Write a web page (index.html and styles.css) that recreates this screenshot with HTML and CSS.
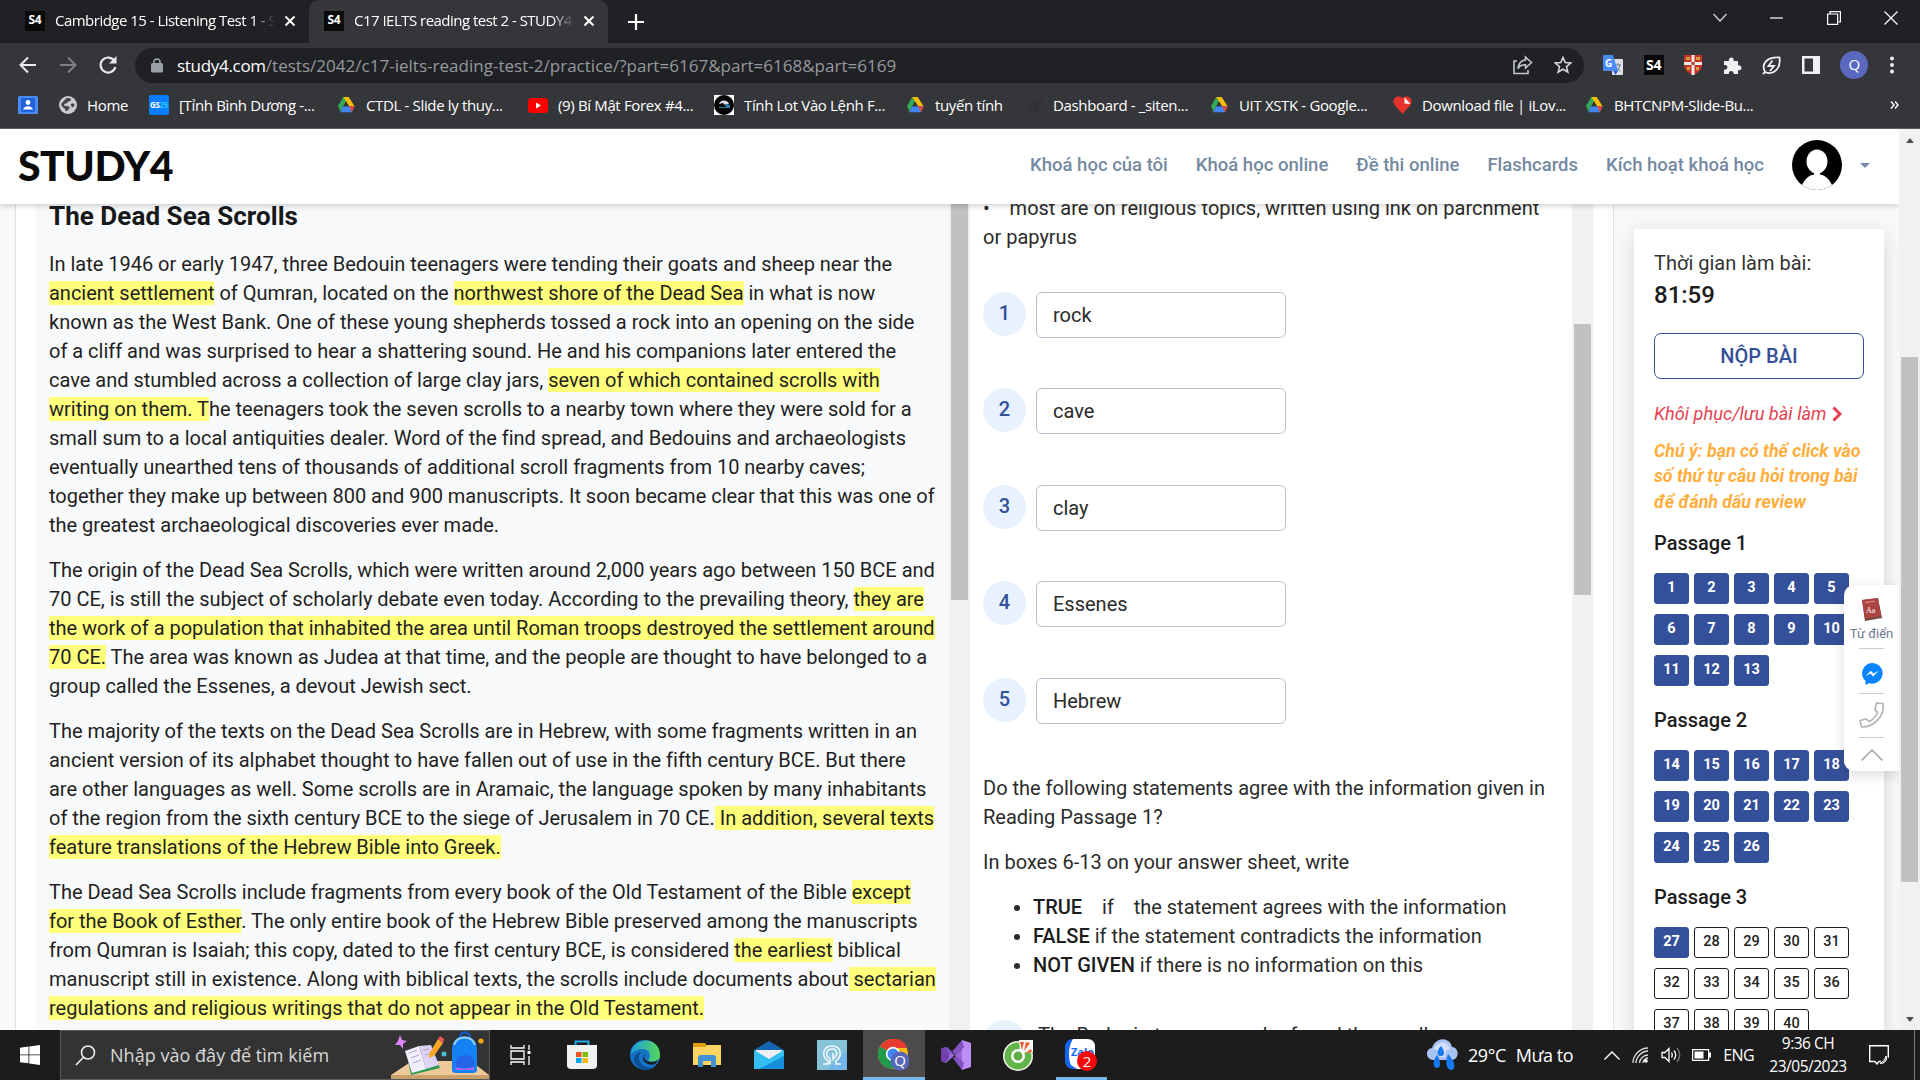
FILE: index.html
```html
<!DOCTYPE html>
<html lang="vi">
<head>
<meta charset="utf-8">
<title>C17 IELTS reading test 2 - STUDY4</title>
<link rel="stylesheet" href="styles.css">
</head>
<body>
<svg class="defs" width="0" height="0">
  <symbol id="drive" viewBox="0 0 20 20"><path d="M7 1h6l-3.500 6L4 17 1 11.500z" fill="#34a853"/><path d="M7 1h6l6.500 10.500h-6z" fill="#fbbc04"/><path d="M6.700 11.500h12.800L16.500 18h-13z" fill="#4285f4"/><path d="M13.500 11.500h6L16.500 18z" fill="#ea4335"/><path d="M1 11.500 4 17l-.5 1z" fill="#188038"/><path d="M10 6.300 13.200 11.500H6.800z" fill="#35363a"/></symbol>
  <symbol id="x" viewBox="0 0 12 12"><path d="M1.500 1.500l9 9M10.500 1.500l-9 9" stroke="#fff" stroke-width="2"/></symbol>
</svg>
<div class="screen">
  <div class="tabstrip">
    <div class="tab"><span class="fav">S4</span><span class="tab-title">Cambridge 15 - Listening Test 1 - STUDY4</span><svg width="12" height="12"><use href="#x"/></svg></div>
    <div class="tab active"><span class="fav">S4</span><span class="tab-title">C17 IELTS reading test 2 - STUDY4</span><svg width="12" height="12"><use href="#x"/></svg></div>
    <svg class="newtab" width="16" height="16" viewBox="0 0 16 16"><path d="M8 0v16M0 8h16" stroke="#fff" stroke-width="2.200"/></svg>
    <div class="winbtns">
      <svg width="14" height="10" viewBox="0 0 14 10"><path d="M.5 1l6.500 7 6.500-7" fill="none" stroke="#ddd" stroke-width="1.200"/></svg>
      <svg width="14" height="14" viewBox="0 0 14 14"><path d="M0 7h13" stroke="#fff" stroke-width="1.200"/></svg>
      <svg width="14" height="14" viewBox="0 0 14 14"><path d="M.6 3h10v10.400H.6zM3 3V.6h10.400V11h-2.600" fill="none" stroke="#fff" stroke-width="1.200"/></svg>
      <svg width="14" height="14" viewBox="0 0 14 14"><path d="M.5.5l13 13M13.500.5l-13 13" stroke="#fff" stroke-width="1.200"/></svg>
    </div>
  </div>
  <div class="toolbar">
    <svg class="nav-ic" width="18" height="18" viewBox="0 0 18 18"><path d="M17 9H2M9 1.500L1.500 9 9 16.500" fill="none" stroke="#e8eaed" stroke-width="2"/></svg>
    <svg class="nav-ic" width="18" height="18" viewBox="0 0 18 18"><path d="M1 9h15M9 1.500L16.500 9 9 16.500" fill="none" stroke="#7d7f83" stroke-width="2"/></svg>
    <svg class="nav-ic" width="18" height="18" viewBox="0 0 18 18"><path d="M15.500 5A7.500 7.500 0 1 0 16.400 11" fill="none" stroke="#e8eaed" stroke-width="2.200"/><path d="M17.500 0v7.500H10z" fill="#e8eaed"/></svg>
    <div class="omnibox">
      <svg width="12" height="15" viewBox="0 0 12 15"><rect x="0" y="5" width="12" height="9.500" rx="1.500" fill="#9aa0a6"/><path d="M3 6V4a3 3 0 0 1 6 0v2" fill="none" stroke="#9aa0a6" stroke-width="1.600"/></svg>
      <div class="url"><b>study4.com</b>/tests/2042/c17-ielts-reading-test-2/practice/?part=6167&amp;part=6168&amp;part=6169</div>
      <svg class="share" width="20" height="20" viewBox="0 0 20 20" fill="none" stroke="#c4c7cb" stroke-width="1.600"><path d="M4 6H1v12.500h14V15"/><path d="M12.500 2l6 5.500-6 5.500v-3.300c-4 0-6 1-7.500 3.800.5-4.500 2.800-8 7.500-8.500z"/></svg>
      <svg width="18" height="18" viewBox="0 0 18 18"><path d="M9 1.500l2.200 5 5.500.5-4.200 3.600 1.300 5.400L9 13.200 4.200 16l1.300-5.400L1.300 7l5.500-.5z" fill="none" stroke="#d5d7da" stroke-width="1.600"/></svg>
    </div>
    <div class="exts">
      <svg width="20" height="21" viewBox="0 0 20 21"><rect x="9" y="4" width="11" height="16" rx="1" fill="#dfe1e4"/><path d="M12 10h6M15 8v2M17 10c-.6 3-2 4.500-4 6M13 12c1 2 2.500 3 4.500 4" stroke="#5f7d91" fill="none"/><path d="M1 0h9l5 16H1a1 1 0 0 1-1-1V1a1 1 0 0 1 1-1z" fill="#4b8bf5"/><path d="M10.500 16H15l-2.500 4z" fill="#2a55c8"/><text x="2" y="12" class="g-letter">G</text></svg>
      <span class="s4ext">S4</span>
      <svg width="18" height="20" viewBox="0 0 18 20"><path d="M0 0h18v9c0 6-4 9-9 11-5-2-9-5-9-11z" fill="#c8322b"/><path d="M7.500 0h3v7H18v3h-7.500v10h-3V10H0V7h7.500z" fill="#f3ece4"/><path d="M2 2h4v3H2zM12 2h4v3h-4zM3 12h3v3H3zM12 12h3v3h-3z" fill="#d69d34"/><circle cx="9" cy="8.500" r="1.800" fill="#b43b32"/></svg>
      <svg width="19" height="19" viewBox="0 0 19 19"><path d="M1 5h5a2.500 2.500 0 1 1 4.600 0H15v4.500a2.500 2.500 0 1 1 0 4.600V18h-4.500a2.400 2.400 0 1 0-4.600 0H1v-4.500a2.400 2.400 0 1 0 0-4.400z" fill="#eef0f2"/></svg>
      <svg width="19" height="19" viewBox="0 0 19 19" fill="none" stroke="#eef0f2" stroke-width="1.800"><path d="M3 16C-1 8 4 1 17.500 1.500 19 12 12 20 3 16L1 18"/><path d="M10.500 4.500L6.500 10h5.500l-4 5"/></svg>
      <svg width="18" height="18" viewBox="0 0 18 18"><path d="M0 0h18v18H0zM2.500 2.500v13H11v-13z" fill="#eef0f2" fill-rule="evenodd"/></svg>
      <span class="profile">Q</span>
      <svg width="6" height="18" viewBox="0 0 6 18" fill="#eef0f2"><circle cx="3" cy="2.500" r="2"/><circle cx="3" cy="9" r="2"/><circle cx="3" cy="15.500" r="2"/></svg>
    </div>
  </div>
  <div class="bookmarks">
    <div><svg width="20" height="18" viewBox="0 0 20 18"><rect width="20" height="18" rx="1.500" fill="#4a8af4"/><rect x="3" y="2" width="14" height="14" fill="#1f62d8"/><circle cx="10" cy="6.500" r="2.400" fill="#fff"/><path d="M5 13.500c1-4.500 9-4.500 10 0z" fill="#fff"/></svg></div>
    <div class="home"><svg width="18" height="18" viewBox="0 0 18 18"><circle cx="9" cy="9" r="9" fill="#c9cbce"/><path d="M7 2.500c3-1 5 0 5 1.500s-3 1-3.500 2.500-3 .5-3.500 2 3 1.500 5 2-1 4-2.500 4.500-1-2-2.500-3-2.500-2-3-4" fill="#45474b"/><path d="M12 8c1-1 3-.5 3.500.500S14 12 13 11s-1.500-2-1-3z" fill="#45474b"/></svg>Home</div>
    <div><span class="gs">GS<i>25</i></span>[Tỉnh Bình Dương -...</div>
    <div class="dr"><svg width="18" height="18"><use href="#drive"/></svg>CTDL - Slide ly thuy...</div>
    <div class="yt"><svg width="20" height="15" viewBox="0 0 20 15"><rect width="20" height="15" rx="3.500" fill="#f00"/><path d="M8 4.500l5 3-5 3z" fill="#fff"/></svg>(9) Bí Mật Forex #4...</div>
    <div class="lot"><svg width="20" height="20" viewBox="0 0 20 20"><path d="M0 0h20v20H0z" fill="#fff"/><circle cx="10" cy="10" r="10" fill="#050505"/><path d="M5 9c2-5 9-4 10 0l-4 1-2-2z" fill="#d7dde2"/><path d="M11 9l5 1v3H5v-1h7z" fill="#287fae"/></svg>Tính Lot Vào Lệnh F...</div>
    <div class="dr"><svg width="18" height="18"><use href="#drive"/></svg>tuyến tính</div>
    <div class="dash"><svg width="20" height="20" viewBox="0 0 20 20"><path d="M19 1L1 12l4 2zM19 1l-4 17-6-3zM5 14l2 4 2-3z" fill="#303135"/></svg>Dashboard - _siten...</div>
    <div class="dr"><svg width="18" height="18"><use href="#drive"/></svg>UIT XSTK - Google...</div>
    <div><svg width="19" height="18" viewBox="0 0 19 18"><path d="M9.500 18L1.500 9C-2 3 4-2 9.500 2c5.500-4 11.500 1 8 7z" fill="#e5322d"/><path d="M11.500 1.500L17.500 8l-6-.5z" fill="#fff"/></svg>Download file | iLov...</div>
    <div class="dr"><svg width="18" height="18"><use href="#drive"/></svg>BHTCNPM-Slide-Bu...</div>
    <svg class="more" width="9" height="8" viewBox="0 0 9 8"><path d="M1 .5L4 4 1 7.500M5 .5L8 4 5 7.500" fill="none" stroke="#fff" stroke-width="1.400"/></svg>
  </div>

  <div class="viewport">
    <div class="site">
      <header class="site-header">
        <div class="logo">STUDY4</div>
        <nav><a>Khoá học của tôi</a><a>Khoá học online</a><a>Đề thi online</a><a>Flashcards</a><a>Kích hoạt khoá học</a></nav>
        <svg class="avatar" width="50" height="50" viewBox="0 0 50 50"><clipPath id="c"><circle cx="25" cy="25" r="25"/></clipPath><g clip-path="url(#c)"><path d="M0 0h50v50H0z"/><path d="M7 52C10 42 16 35 22 34.500V31h6v3.500C34 35 40 42 43 52z" fill="#fff"/><ellipse cx="25" cy="21.500" rx="10.500" ry="12" fill="#fff"/></g></svg>
        <span class="caret"></span>
      </header>
      <main class="work">
        <article class="passage">
          <h1>The Dead Sea Scrolls</h1>
          <p>In late 1946 or early 1947, three Bedouin teenagers were tending their goats and sheep near the<br><mark>ancient settlement</mark> of Qumran, located on the <mark>northwest shore of the Dead Sea</mark> in what is now<br>known as the West Bank. One of these young shepherds tossed a rock into an opening on the side<br>of a cliff and was surprised to hear a shattering sound. He and his companions later entered the<br>cave and stumbled across a collection of large clay jars, <mark>seven of which contained scrolls with</mark><br><mark>writing on them. T</mark>he teenagers took the seven scrolls to a nearby town where they were sold for a<br>small sum to a local antiquities dealer. Word of the find spread, and Bedouins and archaeologists<br>eventually unearthed tens of thousands of additional scroll fragments from 10 nearby caves;<br>together they make up between 800 and 900 manuscripts. It soon became clear that this was one of<br>the greatest archaeological discoveries ever made.</p>
          <p>The origin of the Dead Sea Scrolls, which were written around 2,000 years ago between 150 BCE and<br>70 CE, is still the subject of scholarly debate even today. According to the prevailing theory, <mark>they are</mark><br><mark>the work of a population that inhabited the area until Roman troops destroyed the settlement around</mark><br><mark>70 CE.</mark> The area was known as Judea at that time, and the people are thought to have belonged to a<br>group called the Essenes, a devout Jewish sect.</p>
          <p>The majority of the texts on the Dead Sea Scrolls are in Hebrew, with some fragments written in an<br>ancient version of its alphabet thought to have fallen out of use in the fifth century BCE. But there<br>are other languages as well. Some scrolls are in Aramaic, the language spoken by many inhabitants<br>of the region from the sixth century BCE to the siege of Jerusalem in 70 CE.<mark> In addition, several texts</mark><br><mark>feature translations of the Hebrew Bible into Greek.</mark></p>
          <p>The Dead Sea Scrolls include fragments from every book of the Old Testament of the Bible <mark>except</mark><br><mark>for the Book of Esther</mark>. The only entire book of the Hebrew Bible preserved among the manuscripts<br>from Qumran is Isaiah; this copy, dated to the first century BCE, is considered <mark>the earliest</mark> biblical<br>manuscript still in existence. Along with biblical texts, the scrolls include documents about<mark> sectarian</mark><br><mark>regulations and religious writings that do not appear in the Old Testament.</mark></p>
        </article>
        <div class="track t-left"><i></i></div>
        <section class="questions">
          <p class="lead">•&nbsp;&nbsp; &nbsp;most are on religious topics, written using ink on parchment<br>or papyrus</p>
          <div class="q"><b>1</b><span>rock</span></div>
          <div class="q"><b>2</b><span>cave</span></div>
          <div class="q"><b>3</b><span>clay</span></div>
          <div class="q"><b>4</b><span>Essenes</span></div>
          <div class="q"><b>5</b><span>Hebrew</span></div>
          <p class="task">Do the following statements agree with the information given in<br>Reading Passage 1?</p>
          <p>In boxes 6-13 on your answer sheet, write</p>
          <ul>
            <li><strong>TRUE</strong>&nbsp; &nbsp; if&nbsp; &nbsp; the statement agrees with the information</li>
            <li><strong>FALSE</strong> if the statement contradicts the information</li>
            <li><strong>NOT GIVEN</strong> if there is no information on this</li>
          </ul>
          <div class="q next"><b>6</b><em>The Bedouin teenagers who found the scrolls</em></div>
        </section>
        <div class="track t-right"><i></i></div>
        <aside>
          <div class="card">
            <div class="time-label">Thời gian làm bài:</div>
            <div class="time">81:59</div>
            <div class="submit">NỘP BÀI</div>
            <div class="restore">Khôi phục/lưu bài làm <svg width="10" height="16" viewBox="0 0 10 16"><path d="M1.500 1.500L8 8l-6.500 6.500" fill="none" stroke="#e43f4f" stroke-width="3"/></svg></div>
            <div class="note">Chú ý: bạn có thể click vào<br>số thứ tự câu hỏi trong bài<br>để đánh dấu review</div>
            <h2>Passage 1</h2>
            <div class="nums done"><i>1</i><i>2</i><i>3</i><i>4</i><i>5</i><i>6</i><i>7</i><i>8</i><i>9</i><i>10</i><i>11</i><i>12</i><i>13</i></div>
            <h2>Passage 2</h2>
            <div class="nums done"><i>14</i><i>15</i><i>16</i><i>17</i><i>18</i><i>19</i><i>20</i><i>21</i><i>22</i><i>23</i><i>24</i><i>25</i><i>26</i></div>
            <h2>Passage 3</h2>
            <div class="nums"><i class="on">27</i><i>28</i><i>29</i><i>30</i><i>31</i><i>32</i><i>33</i><i>34</i><i>35</i><i>36</i><i>37</i><i>38</i><i>39</i><i>40</i></div>
          </div>
        </aside>
      </main>
      <div class="float">
        <svg width="22" height="24" viewBox="0 0 22 24"><path d="M1 2l16-2 4 20-17 3z" fill="#6d4a3a"/><path d="M1 2l16-2 3 18-16 3z" fill="#ad4444"/><path d="M4 4.500l10-1.200" stroke="#d99a90"/><text x="5" y="15" class="aa">Aa</text></svg>
        <span>Từ điển</span><hr>
        <svg class="msg" width="22" height="22" viewBox="0 0 22 22"><path d="M11 0a10.700 10.300 0 1 1-3 20.200L4.500 22v-4A10.400 10.400 0 0 1 11 0z" fill="#0a84ff"/><path d="M4.500 13.300l5.300-5.500 2.700 2.800 5-2.800-5.300 5.600-2.700-2.800z" fill="#fff"/></svg><hr>
        <svg class="phone" width="26" height="26" viewBox="0 0 26 26"><path d="M17.500 1l6.500.500c2 12-9 24-21.500 23.500L1 18.500l6.500-1.500 2.500 2.500c3.500-1.500 7-5 8.800-9l-2.800-2.500z" fill="none" stroke="#b3b5b8" stroke-width="1.700" stroke-linejoin="round"/></svg><hr>
        <svg class="up" width="22" height="12" viewBox="0 0 22 12"><path d="M.5 11.500L11 1l10.500 10.500" fill="none" stroke="#aaa" stroke-width="1.600"/></svg>
      </div>
    </div>
    <div class="track t-page"><u class="up-arrow"></u><i></i><u class="down-arrow"></u></div>
  </div>

  <footer class="taskbar">
    <div class="start"><svg width="20" height="20" viewBox="0 0 20 20" fill="#fff"><path d="M0 2.800L8.500 1.500v8H0zM9.300 1.400L20 0v9.500H9.300zM0 10.300h8.500v8L0 17.200zM9.300 10.300H20V20L9.300 18.500z"/></svg></div>
    <div class="search">
      <svg width="21" height="21" viewBox="0 0 21 21"><circle cx="13" cy="7.500" r="6.500" fill="none" stroke="#eee" stroke-width="1.600"/><path d="M8.500 12.200L1 20" stroke="#eee" stroke-width="1.600"/></svg>
      <span>Nhập vào đây để tìm kiếm</span>
      <svg class="school" width="98" height="48" viewBox="0 0 98 48"><path d="M0 44L21 30h59l18 14z" fill="#efc99a"/><path d="M0 44h98v4H0z" fill="#c9a06b"/><path d="M15 20l5 24 29-7-4-9z" fill="#2c9a50"/><path d="M14 20l14-5 7 23-14 4z" fill="#f2eefc"/><path d="M28 15l12-1 8 20-13 4z" fill="#ddd2f7"/><path d="M18 22l8-3M20 27l8-3M22 32l8-3M32 19l6-1M34 24l7-2" stroke="#a8a1c4"/><path d="M38 23l9-15 5 4-9 13-5 2z" fill="#f9a72b"/><path d="M47 8l2-3 4 3-1 4z" fill="#f45858"/><path d="M9 4l2 5 5 1-4 3 0 5-3-4-5 0 3-4z" fill="#e087f5"/><circle cx="53" cy="23" r="2.500" fill="#45c2d2"/><circle cx="90" cy="10" r="2.600" fill="#f7a90b"/><path d="M69 6c0-6 10-6 10 0" fill="none" stroke="#1556c6" stroke-width="2.500"/><path d="M61 39V18C61 1 86 1 86 18v21q0 3-4 3H65q-4 0-4-3z" fill="#1582f4"/><path d="M63 14c3-10 18-10 21 0" fill="none" stroke="#8ed0ff" stroke-width="2"/><path d="M65 38V30c1-8 16-8 18 0v8z" fill="#2464e7"/><path d="M64 36q10 3 19 0v3H65z" fill="#ac6bef"/></svg>
    </div>
    <div class="apps">
      <div><svg width="21" height="20" viewBox="0 0 21 20" fill="none" stroke="#fff" stroke-width="1.300"><path d="M1 0v3h13V0M1 20v-3h13v3M1 6h13v8H1zM19 0v5M19 11v9"/><path d="M17.500 6h3v3h-3z" fill="#fff" stroke="none"/></svg></div>
      <div><svg width="30" height="30" viewBox="0 0 30 30"><path d="M8.500 6V1.500h13V6" fill="none" stroke="#22a7e8" stroke-width="2"/><path d="M0 5h30v20q0 4-4 4H4q-4 0-4-4z" fill="#f0f1f2"/><path d="M9 12h5.500v5H9z" fill="#f25022"/><path d="M15.500 12H21v5h-5.500z" fill="#7fba00"/><path d="M9 18h5.500v5H9z" fill="#00a4ef"/><path d="M15.500 18H21v5h-5.500z" fill="#ffb900"/></svg></div>
      <div><svg width="30" height="30" viewBox="0 0 30 30"><defs><linearGradient id="e"><stop stop-color="#1b9de2"/><stop offset="1" stop-color="#56d858"/></linearGradient></defs><circle cx="15" cy="15" r="15" fill="#1573c7"/><path d="M1 11C7-5 30-2 30 15c0 7-8 8-12 5 4-4 1-11-5-11-5 0-9 2-12 5z" fill="url(#e)"/><path d="M11 12c-6 8 2 18 13 15-4 4-12 4-17-1C1 21 4 13 11 12z" fill="#0d4f94"/><path d="M15 14c-3 4 1 8 6 8 3 0 5-1 7-2-1 2-2 3-3 4-5 2-12-1-12-6 0-2 1-3 2-4z" fill="#1c1c1c"/></svg></div>
      <div><svg width="28" height="24" viewBox="0 0 28 24"><path d="M0 0h12l2 3v5H0z" fill="#dda008"/><path d="M0 4h12l2-2h14v20H0z" fill="#fcd462"/><path d="M5 24v-9q0-3 3-3h12q3 0 3 3v9h-5v-6H10v6z" fill="#3f92d3"/></svg></div>
      <div><svg width="30" height="28" viewBox="0 0 30 28"><path d="M0 9L15 0l15 9v6H0z" fill="#1565b2"/><path d="M2 9h26v8L15 21 2 17z" fill="#f0f0f2"/><path d="M0 9l15 9 15-9v19H0z" fill="#32bff1"/><path d="M30 28H5l25-13z" fill="#168edb"/></svg></div>
      <div><svg width="30" height="30" viewBox="0 0 30 30"><path d="M0 0h30v30H0z" fill="#86c2d8"/><path d="M30 10v20H10z" fill="#73b5e8"/><path d="M6 24h5v-3c-7-5-5-15 4-15s11 10 4 15v3h5M13 24v-5c-6-5-3-10 2-10s6 5 3 8l-2 2v-6" fill="none" stroke="#f1fbff" stroke-width="1.500"/></svg></div>
      <div class="running"><svg width="31" height="32" viewBox="0 0 31 32"><circle cx="15" cy="15" r="15" fill="#fbbd14"/><path d="M15 15L2 7.500C10-4 26-2 29 9H15z" fill="#e93a2f"/><path d="M2 7.500C-4 18 4 30 15 30l5-9-5-6z" fill="#20994b"/><circle cx="15" cy="15" r="7.200" fill="#fff"/><circle cx="15" cy="15" r="5.500" fill="#4285f4"/><circle cx="22" cy="22" r="9.500" fill="#5667ba"/><text x="22" y="27" class="q-badge">Q</text></svg></div>
      <div><svg width="30" height="30" viewBox="0 0 30 30"><path d="M0 9l4-2 19 16V7L5 23l-5-2 7-6z" fill="#9668da"/><path d="M0 9l4-2 4 5v6l-4 5-4-2z" fill="#7142ad"/><path d="M21 0l9 3v24l-9 3z" fill="#bd8cf6"/><path d="M21 0L9 14l3 5 11-12zM21 30L4 8l2-1 17 16z" fill="#8152c0"/></svg></div>
      <div><svg width="31" height="31" viewBox="0 0 31 31"><circle cx="15" cy="16" r="15" fill="#f3f8ec"/><circle cx="15" cy="16" r="13.500" fill="#62b548"/><path d="M17 13L16 0h14v12z" fill="#f6f7f2"/><path d="M17 2l4 0-2 8zM23 2l4 1-6 8zM28 9l1 3-7 1z" fill="#f05b38"/><circle cx="15" cy="16" r="7" fill="#fff"/><circle cx="15" cy="16" r="4.500" fill="#61af43"/></svg></div>
      <div class="zalo"><svg width="33" height="32" viewBox="0 0 33 32"><rect width="29" height="30" rx="8" fill="#1565f3"/><path d="M8 0h14q8 0 8 8v14q0 8-8 8H12l-6-4C3 20 3 7 8 0z" fill="#fff"/><text x="6" y="17" class="zalo-t">Zalo</text><circle cx="22" cy="22" r="10" fill="#f70808"/><text x="22" y="27.500" class="two">2</text></svg></div>
    </div>
    <div class="weather"><svg width="31" height="33" viewBox="0 0 31 33"><path d="M6 21C-2 20-2 10 5 9 9-3 23-2 25 8c7 0 8 12 0 13z" fill="#a9c3f2"/><path d="M7 10c3-8 13-9 16 0-4 0-5 4-5 8h-5c-1-5-2-7-6-8z" fill="#d3e0fa"/><path d="M14 7c4 5 4 10 0 10s-5-5 0-10zM10 16c4 6 4 13 0 13s-5-7 0-13zM21 15c8 8 8 16 3 16s-6-9-3-16z" fill="#1679ed"/></svg><span>29°C</span><span>Mưa to</span></div>
    <div class="tray">
      <svg width="16" height="9" viewBox="0 0 16 9"><path d="M.5 8.500L8 1l7.500 7.500" fill="none" stroke="#fff" stroke-width="1.400"/></svg>
      <svg width="17" height="16" viewBox="0 0 17 16" fill="none" stroke="#ddd" stroke-width="1.300"><path d="M1 16C1 8 8 1 16 1M4 16C4 10 10 4 16 4M7.500 16c0-4 4-8 8.500-8M11 16c0-2 2-5 5-5"/><circle cx="14" cy="14" r="1.800" fill="#fff" stroke="none"/></svg>
      <svg width="20" height="16" viewBox="0 0 20 16" fill="none" stroke="#fff" stroke-width="1.300"><path d="M1 5.500h3l4-4v13l-4-4H1zM10.500 5.500q1.500 2.500 0 5M13 3.500q3.500 4.500 0 9"/><path d="M16 1q5.500 7 0 14" stroke="#777"/></svg>
      <svg width="19" height="12" viewBox="0 0 19 12"><path d="M.6.6h16v10.800H.6z" fill="none" stroke="#fff" stroke-width="1.200"/><path d="M2.500 2.500h9v7h-9zM17 3.500h2v5h-2z" fill="#fff"/></svg>
      <span>ENG</span>
    </div>
    <div class="clock">9:36 CH<br>23/05/2023</div>
    <svg class="notif" width="20" height="20" viewBox="0 0 20 20"><path d="M12 16.500H10L8 19l-2-2.500H.7V.7h18.600v12" fill="none" stroke="#fff" stroke-width="1.400"/><path d="M17 11c2 4-2 8-6 7.500 3-1.500 5-4 6-7.500z" fill="#999" stroke="#fff"/></svg>
    <i class="peek"></i>
  </footer>
</div>
</body>
</html>
```
FILE: styles.css
```css
* { box-sizing: border-box; }
body { margin: 0; overflow: hidden; font-family: Roboto, sans-serif; }
svg { display: block; flex: none; }
.defs { position: absolute; }
.screen { width: 1920px; height: 1080px; display: flex; flex-direction: column; overflow: hidden; }

/* browser chrome */
.tabstrip, .toolbar, .bookmarks, .taskbar { font-family: "Open Sans", "Noto Sans", sans-serif; color: #fff; flex: none; white-space: nowrap; }
.tabstrip { height: 43px; background: #202124; display: flex; align-items: center; }
.tab { width: 299px; height: 43px; padding: 0 4px 2px 15px; margin-left: 10px; display: flex; align-items: center; }
.tab.active { margin-left: 0; background: #35363a; border-radius: 10px 10px 0 0; }
.fav { width: 20px; height: 20px; background: #0a0a0a; font: 700 12px/18px "Open Sans", sans-serif; letter-spacing: -.2px; text-align: center; }
.tab-title { width: 220px; margin: -2px 9px 0 10px; overflow: hidden; font-size: 15px; letter-spacing: -.52px; line-height: 24px; -webkit-mask-image: linear-gradient(90deg, #000 90%, transparent); mask-image: linear-gradient(90deg, #000 90%, transparent); }
.newtab { margin-left: 20px; }
.winbtns { margin: -7px 22px 0 auto; display: flex; align-items: center; gap: 43px; }
.toolbar { height: 44px; background: #35363a; display: flex; align-items: center; padding: 0 25px 0 19px; }
.nav-ic { margin-right: 22px; }
.omnibox { flex: none; width: 1449px; height: 35px; margin-left: -4px; border-radius: 18px; background: #202124; display: flex; align-items: center; padding: 0 12px 0 16px; }
.url { margin-left: 14px; margin-right: auto; font-size: 17px; letter-spacing: .02px; color: #96999d; }
.url b { font-weight: 400; color: #fff; letter-spacing: -.3px; }
.share { margin-right: 21px; }
.exts { flex: 1; margin-left: 19px; display: flex; align-items: center; justify-content: space-between; }
.g-letter { font: 700 10px "Open Sans", sans-serif; fill: #fff; }
.s4ext { width: 20px; height: 20px; background: #080808; font: 700 14px/20px "Open Sans", sans-serif; text-align: center; letter-spacing: -.4px; }
.profile { width: 28px; height: 28px; border-radius: 50%; background: #5b68bf; font-size: 15px; line-height: 27px; text-align: center; }
.bookmarks { height: 42px; background: #35363a; border-bottom: 1px solid #5a5b5e; padding: 0 21px 5px 18px; display: grid; grid-template-columns: 42px 89px 188px 191px 186px 192px 117px 187px 183px 192px 1fr 9px; align-items: center; font-size: 15px; letter-spacing: -.35px; }
.bookmarks div { display: flex; align-items: center; gap: 10px; }
.bookmarks .home { margin-left: -1px; }
.bookmarks .dr { gap: 11px; }
.gs { width: 20px; height: 20px; border-radius: 2px; background: #0a7cff; font: 700 8px/20px "Open Sans", sans-serif; text-align: center; }
.gs i { color: #27c4ff; font-style: normal; }

/* page */
.viewport { height: 901px; display: flex; flex: none; }
.site { width: 1899px; position: relative; display: flex; flex-direction: column; overflow: hidden; }
.site-header { height: 75px; flex: none; z-index: 2; background: #fff; box-shadow: 0 2px 6px rgba(0,0,0,.18); display: flex; align-items: center; padding: 0 29px 0 18px; }
.logo { margin-right: auto; margin-top: -2px; font: 900 41px/50px Lato, sans-serif; letter-spacing: -.5px; color: #0a0a0a; }
.site-header nav { display: flex; gap: 28px; margin-right: 28px; font-size: 18.500px; font-weight: 500; color: #748aa1; white-space: nowrap; margin-top: -3px; }
.avatar { margin-top: -4px; }
.caret { margin: -2px 0 0 18px; border: 5px solid transparent; border-top-color: #748aa1; border-bottom: 0; }
.work { flex: 1; min-height: 0; display: flex; background: #f8f9fa; }
.work > * { flex: none; }
.work p, .work ul { margin: 0 0 16px; font-size: 20px; line-height: 29px; white-space: nowrap; }
.passage { width: 934px; margin-left: 15px; border-left: 1px solid #dee2e6; box-shadow: inset 20px 0 #fff; padding-left: 33px; color: #1f1f1f; overflow: hidden; }
.passage p { letter-spacing: -.01px; }
.passage h1 { margin: -4px 0 18px; font-size: 26px; line-height: 32px; font-weight: 700; letter-spacing: .05px; color: #17181a; }
mark { background: #ffff7b; color: inherit; }
.track { width: 21px; flex: none; background: #f1f1f1; padding: 0 2px; }
.track i { display: block; background: #c1c1c1; }
.t-left i { height: 396px; }
.t-right i { margin-top: 120px; height: 271px; }
.questions { width: 602px; background: #fff; padding-left: 13px; color: #2b2b2b; overflow: hidden; }
.questions .lead { margin: -10px 0 39.500px; }
.questions .task { margin-top: -.5px; }
.q { height: 46px; margin-bottom: 50.5px; display: flex; gap: 10px; font-size: 20px; }
.q b { width: 43px; height: 44px; border-radius: 50%; background: #e8f2ff; color: #35509a; font-weight: 500; line-height: 43px; text-align: center; }
.q span { width: 250px; height: 46px; border: 1px solid #b8c0d0; border-radius: 6px; padding-left: 16px; line-height: 45px; }
.q em { font-style: normal; line-height: 30px; white-space: nowrap; padding-left: 2px; }
.questions ul { padding-left: 50px; margin-bottom: 40px; }
.questions strong { font-weight: 500; color: #1c1c1c; }
.work aside { width: 286px; border-left: 1px solid #dee2e6; margin-left: 20px; box-shadow: -20px 0 #fff; padding: 25px 0 0 20px; }
.card { width: 250px; height: 900px; background: #fff; box-shadow: 0 5px 20px rgba(0,0,0,.14); padding: 20px 20px 0; }
.time-label { font-size: 20px; line-height: 28px; color: #333; }
.time { font-size: 24px; line-height: 36px; font-weight: 500; color: #1c1c1c; }
.submit { height: 46px; margin-top: 20px; border: 1px solid #35509a; border-radius: 7px; color: #35509a; font-size: 20px; font-weight: 500; line-height: 44px; text-align: center; }
.restore { display: flex; gap: 5px; align-items: center; margin-top: 21px; height: 27px; font-size: 18.200px; font-style: italic; color: #e43f4f; white-space: nowrap; }
.note { margin-top: 11px; font-size: 17.800px; font-style: italic; font-weight: 700; line-height: 25.300px; color: #ffad3b; white-space: nowrap; }
.card h2 { margin: 15px 0 16px; font-size: 20px; line-height: 28px; font-weight: 500; color: #1c1c1c; }
.nums { display: grid; grid-template-columns: repeat(5, 35px); gap: 10.300px 5px; margin-bottom: 19.400px; }
.nums i { height: 31px; border: 1px solid #1c1c1c; border-radius: 3px; font: 500 14.500px/28px Roboto, sans-serif; text-align: center; color: #222; }
.nums.done i, .nums .on { background: #35509a; border-color: #35509a; color: #fff; font-weight: 700; }
.float { position: absolute; right: 0; top: 456px; z-index: 3; width: 55px; height: 186px; background: #fff; border-radius: 10px 0 0 10px; box-shadow: 0 4px 14px rgba(0,0,0,.14); display: flex; flex-direction: column; align-items: center; padding-top: 13px; }
.float span { margin-top: 4px; font-size: 13px; line-height: 16px; color: #6b7a8d; white-space: nowrap; }
.float hr { width: 25px; height: 1px; flex: none; margin: 6px 0 0; border: 0; background: #ccc; }
.aa { font: 8px "Liberation Serif", serif; fill: #fff; }
.float .msg { margin: 14px 0 2px; }
.float .phone { margin: 8px 0 3px; }
.float .up { margin-top: 11px; }
.t-page { display: flex; flex-direction: column; align-items: center; }
.t-page i { width: 17px; height: 525px; margin-top: 214px; }
.t-page u { border: 4.500px solid transparent; }
.t-page .up-arrow { border-bottom: 5px solid #505050; border-top: 0; margin-top: 9px; }
.t-page .down-arrow { border-top: 5px solid #505050; border-bottom: 0; margin-top: 135px; }

/* taskbar */
.taskbar { height: 50px; background: #1c1c1c; display: flex; align-items: center; }
.start { width: 60px; padding-left: 20px; }
.search { width: 430px; height: 50px; background: #333; border: 1px solid #5a5a5a; display: flex; align-items: center; padding-left: 14px; font-size: 18px; letter-spacing: .03px; color: #d8d8d8; }
.search span { margin-left: 14px; }
.school { margin-left: auto; }
.apps { display: flex; height: 50px; margin-left: -1px; }
.apps div { width: 62.300px; display: flex; justify-content: center; align-items: center; }
.running { background: #4b4b4b; box-shadow: inset 0 -3px #76b9ed; }
.apps .zalo { width: 51px; margin-left: 6px; box-shadow: inset 0 -3px #76b9ed; }
.q-badge, .two { font: 15px "Open Sans", sans-serif; fill: #fff; text-anchor: middle; }
.zalo-t { font: 700 11px "Open Sans", sans-serif; fill: #1565f3; }
.weather { margin-left: auto; width: 177px; display: flex; align-items: center; font-size: 18px; letter-spacing: -.45px; }
.weather span { margin-left: 10px; }
.tray { width: 150px; display: flex; align-items: center; justify-content: space-between; font-size: 16px; letter-spacing: -.6px; }
.clock { width: 108px; text-align: center; font-size: 15.500px; letter-spacing: -.5px; line-height: 23px; }
.notif { margin: 0 25px 0 7px; }
.peek { width: 1px; height: 50px; margin-right: 5px; background: #777; }
```
